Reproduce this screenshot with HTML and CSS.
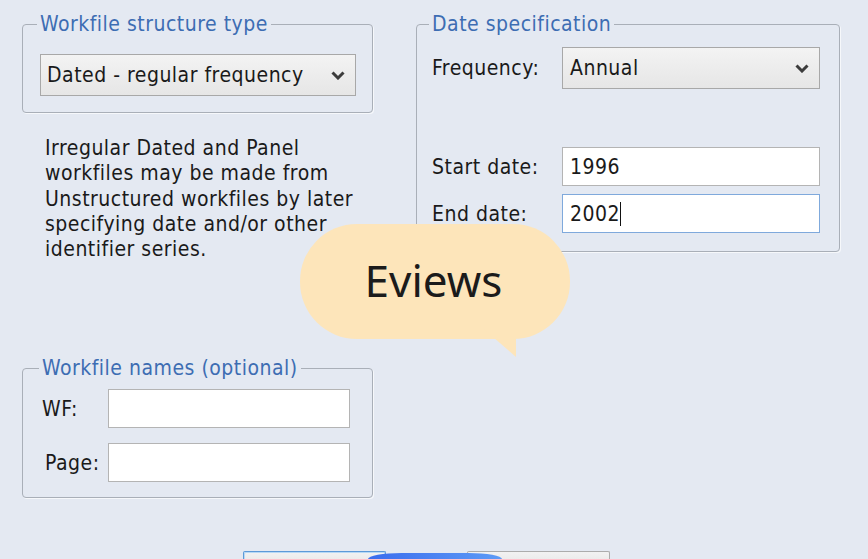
FILE: index.html
```html
<!DOCTYPE html>
<html>
<head>
<meta charset="utf-8">
<link rel="stylesheet" href="styles.css">
</head>
<body>
<div class="dialog">
  <div class="columns">
    <div class="col col-left">
      <fieldset class="group group-struct">
        <legend>Workfile structure type</legend>
        <div class="combo combo-struct">
          <span class="combo-text">Dated - regular frequency</span>
          <svg class="chev" width="14" height="9" viewBox="0 0 14 9"><path d="M1.5 1.5 L7 7 L12.5 1.5" fill="none" stroke="#3c3c3c" stroke-width="3"/></svg>
        </div>
      </fieldset>
      <p class="desc">Irregular Dated and Panel<br>workfiles may be made from<br>Unstructured workfiles by later<br>specifying date and/or other<br>identifier series.</p>
      <fieldset class="group group-names">
        <legend>Workfile names (optional)</legend>
        <div class="row row-wf">
          <span class="label label-wf">WF:</span>
          <div class="field field-name"></div>
        </div>
        <div class="row row-page">
          <span class="label label-page">Page:</span>
          <div class="field field-name"></div>
        </div>
      </fieldset>
    </div>
    <div class="col col-right">
      <fieldset class="group group-date">
        <legend>Date specification</legend>
        <div class="row row-freq">
          <span class="label label-date">Frequency:</span>
          <div class="combo combo-freq">
            <span class="combo-text">Annual</span>
            <svg class="chev" width="14" height="9" viewBox="0 0 14 9"><path d="M1.5 1.5 L7 7 L12.5 1.5" fill="none" stroke="#3c3c3c" stroke-width="3"/></svg>
          </div>
        </div>
        <div class="row row-start">
          <span class="label label-date">Start date:</span>
          <div class="field field-date">1996</div>
        </div>
        <div class="row row-end">
          <span class="label label-date">End date:</span>
          <div class="field field-date field-focus">2002<span class="caret"></span></div>
        </div>
      </fieldset>
    </div>
  </div>
  <div class="buttons">
    <div class="btn btn-default"></div>
    <div class="btn"></div>
  </div>
  <div class="bubble"><span class="bubble-text">Eviews</span></div>
  <div class="pill"></div>
</div>
</body>
</html>
```

FILE: styles.css
```css
html, body {
  margin: 0;
  padding: 0;
  background: #e4e9f2;
  overflow: hidden;
}
body {
  width: 868px;
  height: 559px;
  font-family: "DejaVu Sans Condensed", "DejaVu Sans", sans-serif;
  font-size: 21px;
  letter-spacing: 0.5px;
  color: #1a1a1a;
}
.dialog {
  position: relative;
  width: 868px;
  height: 559px;
  padding: 12px 0 0 22px;
  box-sizing: border-box;
  overflow: hidden;
}
.columns {
  display: flex;
  align-items: flex-start;
  gap: 43px;
}
.col-left {
  width: 351px;
  display: flex;
  flex-direction: column;
}
.col-right {
  width: 424px;
}
.group {
  margin: 0;
  border: 1px solid #a9afb8;
  border-radius: 4px;
  box-shadow: 1px 1px 0 #f6f8fb;
  box-sizing: border-box;
  min-width: 0;
}
.group legend {
  color: #3d6db3;
  line-height: 24px;
  padding: 0 3px;
  margin-left: -3px;
}
.group-struct {
  width: 351px;
  padding: 18px 16px 16px 17px;
}
.combo {
  display: flex;
  align-items: center;
  justify-content: space-between;
  border: 1px solid #a8a8a8;
  background: linear-gradient(#f3f3f3, #e6e6e6);
  box-sizing: border-box;
  height: 42px;
  padding: 0 10px 0 6px;
}
.combo-struct {
  width: 316px;
}
.combo-freq {
  width: 258px;
  padding-left: 7px;
}
.chev {
  display: block;
}
.desc {
  margin: 23px 0 0 0;
  padding-left: 23px;
  line-height: 25.3px;
}
.group-names {
  width: 351px;
  margin-top: 94px;
  padding: 9px 22px 15px 19px;
}
.row {
  display: flex;
  align-items: center;
}
.label-wf, .label-page {
  width: 66px;
}
.label-page {
  padding-left: 3px;
  width: 63px;
}
.row-page {
  margin-top: 15px;
}
.field {
  background: #fff;
  border: 1px solid #b4b4b4;
  box-sizing: border-box;
  height: 39px;
  display: flex;
  align-items: center;
  padding-left: 7px;
}
.field-name {
  width: 242px;
}
.group-date {
  width: 424px;
  padding: 11px 19px 18px 15px;
}
.label-date {
  width: 130px;
}
.field-date {
  width: 258px;
}
.row-start {
  margin-top: 58px;
}
.row-end {
  margin-top: 8px;
}
.field-focus {
  border-color: #7fa9dc;
}
.caret {
  display: inline-block;
  width: 1px;
  height: 24px;
  background: #111;
  margin-left: 0;
}
.buttons {
  display: flex;
  gap: 81px;
  margin-top: 53px;
  padding-left: 221px;
}
.btn {
  width: 143px;
  height: 8px;
  box-sizing: border-box;
  border: 1px solid #acacac;
  border-bottom: 0;
  border-radius: 2px 2px 0 0;
  background: linear-gradient(#f2f2f2, #ececec);
}
.btn-default {
  border-color: #5d9ad8;
  box-shadow: inset 1px 1px 0 #b8d9f5, inset -1px 0 0 #b8d9f5;
}
.bubble {
  position: absolute;
  left: 300px;
  top: 224px;
  width: 270px;
  height: 115px;
  border-radius: 57px;
  background: #fde5ba;
  display: flex;
  align-items: center;
  justify-content: center;
}
.bubble::after {
  content: "";
  position: absolute;
  left: 178px;
  top: 100px;
  width: 0;
  height: 0;
  border-left: 38px solid transparent;
  border-top: 33px solid #fde5ba;
}
.bubble-text {
  font-family: "Noto Sans", "Open Sans", sans-serif;
  font-size: 44px;
  letter-spacing: 0;
  color: #1b1b1b;
  margin: -4px 0 0 -3px;
}
.pill {
  position: absolute;
  left: 368px;
  top: 553px;
  width: 134px;
  height: 6px;
  border-radius: 67px 67px 0 0 / 12px 12px 0 0;
  background: linear-gradient(90deg, #3a6cee, #5d9bf6);
}
```
